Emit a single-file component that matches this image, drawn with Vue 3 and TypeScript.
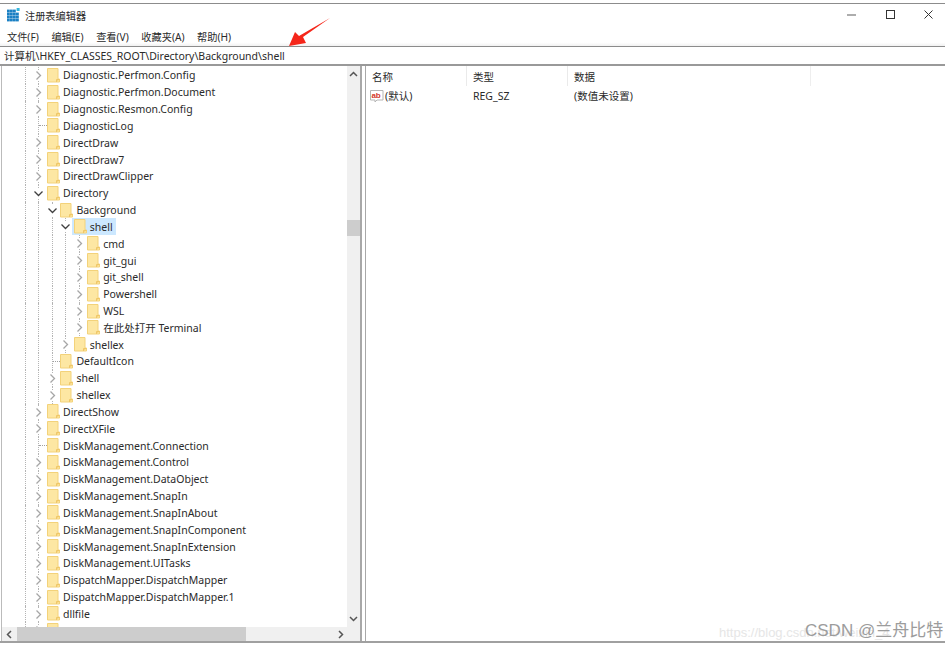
<script setup lang="ts">
interface Row { name: string; d: number; kind: 'closed' | 'open' | 'leaf'; sel?: boolean }
const r = (name: string, d = 0, kind: Row['kind'] = 'closed', sel = false): Row => ({ name, d, kind, sel })
const rows: Row[] = [
  r('Diagnostic.Perfmon.Config'), r('Diagnostic.Perfmon.Document'), r('Diagnostic.Resmon.Config'),
  r('DiagnosticLog', 0, 'leaf'), r('DirectDraw'), r('DirectDraw7'), r('DirectDrawClipper'),
  r('Directory', 0, 'open'), r('Background', 1, 'open'), r('shell', 2, 'open', true),
  r('cmd', 3), r('git_gui', 3), r('git_shell', 3), r('Powershell', 3), r('WSL', 3), r('在此处打开 Terminal', 3),
  r('shellex', 2), r('DefaultIcon', 1, 'leaf'), r('shell', 1), r('shellex', 1),
  r('DirectShow'), r('DirectXFile'), r('DiskManagement.Connection', 0, 'leaf'),
  r('DiskManagement.Control'), r('DiskManagement.DataObject'), r('DiskManagement.SnapIn'),
  r('DiskManagement.SnapInAbout'), r('DiskManagement.SnapInComponent'), r('DiskManagement.SnapInExtension'),
  r('DiskManagement.UITasks'), r('DispatchMapper.DispatchMapper'), r('DispatchMapper.DispatchMapper.1'),
  r('dllfile'), r(''),
]
const menus = ['文件(F)', '编辑(E)', '查看(V)', '收藏夹(A)', '帮助(H)']
const cols = ['名称', '类型', '数据']
const grid = [0, 1, 2, 3]
</script>

<template>
  <div class="win">
    <header class="title">
      <svg class="appicon" width="14" height="14" viewBox="0 0 14 14">
        <template v-for="y in grid" :key="y">
          <rect v-for="x in grid" :key="x" v-show="!(y === 0 && x === 3)" :x="x * 3" :y="y * 3 + 1.6" width="2.8" height="2.8" fill="#1a80c4" />
        </template>
        <rect x="9.6" y="0" width="3" height="3" fill="#35b6dc" />
      </svg>
      <span class="title-text">注册表编辑器</span>
      <div class="controls">
        <svg width="11" height="11" viewBox="0 0 11 11"><path d="M1 6h9" stroke="#777" stroke-width="1.2" /></svg>
        <svg width="11" height="11" viewBox="0 0 11 11"><rect x="1.5" y="1.5" width="8" height="8" fill="none" stroke="#333" /></svg>
        <svg width="11" height="11" viewBox="0 0 11 11"><path d="M1.5 1.5l8 8M9.5 1.5l-8 8" stroke="#333" /></svg>
      </div>
    </header>

    <nav class="menu"><span v-for="m in menus" :key="m">{{ m }}</span></nav>
    <div class="address">计算机\HKEY_CLASSES_ROOT\Directory\Background\shell</div>

    <main class="panes">
      <section class="left">
        <div class="upper">
          <div class="tree">
            <div v-for="(row, i) in rows" :key="i" class="row">
              <span v-for="g in row.d + 1" :key="g" class="guide"></span>
              <span class="stem">
                <span v-if="row.kind === 'leaf'" class="dash"></span>
                <svg v-else class="chev" width="11" height="11" viewBox="0 0 11 11">
                  <path v-if="row.kind === 'closed'" d="M3.500 1.500l4 4-4 4" fill="none" stroke="#a6a6a6" stroke-width="1.3" />
                  <path v-else d="M1.500 3.500l4 4 4-4" fill="none" stroke="#404040" stroke-width="1.3" />
                </svg>
              </span>
              <span class="item" :class="{ sel: row.sel }">
                <svg class="folder" width="13" height="15" viewBox="0 0 13 15">
                  <path d="M.5.5h10.500v10.500h1.500v3H.5z" fill="#fde7a3" stroke="#f3d27a" />
                  <path d="M9.500 14V11.500h3" fill="#f7d57f" stroke="#efc768" />
                </svg>
                <span class="label">{{ row.name }}</span>
              </span>
            </div>
          </div>
          <div class="vbar">
            <svg width="13" height="13" viewBox="0 0 13 13"><path d="M3 8l3.500-3.500L10 8" fill="none" stroke="#555" stroke-width="1.5" /></svg>
            <div class="vthumb"></div>
            <svg class="down" width="13" height="13" viewBox="0 0 13 13"><path d="M3 5l3.500 3.500L10 5" fill="none" stroke="#555" stroke-width="1.500" /></svg>
          </div>
        </div>
        <div class="hbar">
          <svg width="13" height="13" viewBox="0 0 13 13"><path d="M8 3L4.500 6.500 8 10" fill="none" stroke="#555" stroke-width="1.500" /></svg>
          <div class="hthumb"></div>
          <svg class="right-arrow" width="13" height="13" viewBox="0 0 13 13"><path d="M5 3l3.500 3.500L5 10" fill="none" stroke="#555" stroke-width="1.500" /></svg>
        </div>
      </section>

      <section class="right">
        <div class="thead">
          <span v-for="c in cols" :key="c" class="th">{{ c }}</span>
        </div>
        <div class="tr">
          <span class="td name">
            <svg width="14" height="14" viewBox="0 0 14 14">
              <path d="M.5 1.500h12.500v9.500H7l-2 2v-2H.5z" fill="#fff" stroke="#b5b5b5" />
              <text x="1.400" y="8.800" font-size="8" font-weight="700" fill="#d2382a" font-family="Liberation Sans, sans-serif">ab</text>
            </svg>
            (默认)
          </span>
          <span class="td">REG_SZ</span>
          <span class="td">(数值未设置)</span>
        </div>
      </section>
    </main>

    <svg class="arrow" width="50" height="36" viewBox="0 0 50 36">
      <polygon points="1,32 7,18 11,22 42,4 15,23 18,29" fill="#f5261a" />
    </svg>
    <div class="wm-url">https://blog.csdn.net/weixin_4</div>
    <div class="wm">CSDN @兰舟比特</div>
  </div>
</template>

<style>
body { margin: 0; background: #fff; }
</style>

<style scoped>
.win {
  position: relative;
  width: 945px;
  height: 645px;
  overflow: hidden;
  background: #fff;
  color: #2a2a2a;
  font-family: "Noto Sans", "Noto Sans CJK SC", sans-serif;
  font-size: 10.5px;
  display: flex;
  flex-direction: column;
  padding-top: 3px;
  box-sizing: border-box;
}
.title {
  height: 22px;
  padding-bottom: 2px;
  border-top: 1px solid #8c8c8c;
  display: flex;
  align-items: center;
  padding-left: 7px;
  flex: none;
}
.appicon { margin-right: 4px; }
.title-text { font-size: 10.2px; }
.controls {
  margin-left: auto;
  display: flex;
  align-items: center;
  gap: 27.500px;
  padding-right: 11px;
  margin-top: -1px;
}
.menu {
  height: 16px;
  padding-bottom: 2px;
  flex: none;
  display: flex;
  align-items: center;
  padding-left: 7px;
  gap: 12.600px;
  font-size: 10.2px;
  background: linear-gradient(#fff 80%, #f1f1f1);
}
.address {
  height: 17px;
  flex: none;
  border-top: 1px solid #8c8c8c;
  border-bottom: 2px solid #999;
  display: flex;
  align-items: center;
  padding-left: 4px;
  font-size: 10.5px;
}
.panes {
  flex: 1;
  min-height: 0;
  display: flex;
  border-bottom: 2px solid #a0a0a0;
  margin-bottom: 2px;
  padding-left: 2px;
}
.left {
  width: 358px;
  flex: none;
  display: flex;
  flex-direction: column;
  border-right: 2px solid #a8a8a8;
  border-left: 1px solid #bbb;
  margin-left: -1px;
}
.upper { flex: 1; min-height: 0; display: flex; }
.tree {
  width: 345px;
  flex: none;
  overflow: hidden;
  padding-left: 23px;
  padding-top: 1px;
  box-sizing: border-box;
}
.row {
  height: 16.84px;
  display: flex;
  align-items: stretch;
}
.guide {
  width: 13.400px;
  flex: none;
  box-sizing: border-box;
  border-left: 1px dotted #b4b4b4;
}
.stem {
  position: relative;
  width: 8.600px;
  flex: none;
  box-sizing: border-box;
  border-left: 1px dotted #b4b4b4;
}
.chev {
  position: absolute;
  left: -6px;
  top: 3px;
  background: #fff;
}
.dash {
  position: absolute;
  left: 0;
  right: 0;
  top: 8px;
  border-top: 1px dotted #a0a0a0;
}
.item {
  display: flex;
  align-items: center;
  padding-right: 3px;
  margin-left: -2px;
  padding-left: 2px;
  white-space: nowrap;
}
.item.sel { background: #cce8ff; }
.folder { flex: none; }
.label {
  margin-left: 3px;
  font-size: 10.5px;
  color: #2a2a2a;
}
.vbar {
  width: 13px;
  flex: none;
  background: #f0f0f0;
  display: flex;
  flex-direction: column;
  padding-top: 2px;
}
.vthumb {
  height: 16px;
  background: #cdcdcd;
  margin-top: 139px;
}
.down { margin-top: auto; margin-bottom: 2px; }
.hbar {
  height: 14px;
  flex: none;
  background: #f0f0f0;
  display: flex;
  align-items: center;
  padding-left: 1px;
}
.hthumb {
  width: 229px;
  height: 14px;
  margin-left: 1px;
  background: #cdcdcd;
}
.right-arrow { margin-left: auto; margin-right: 13px; }
.right {
  flex: 1;
  min-width: 0;
  margin-left: 3px;
  border-left: 1px solid #a8a8a8;
}
.thead {
  height: 20px;
  display: flex;
  align-items: center;
  width: 445px;
  box-sizing: border-box;
  border-right: 1px solid #eee;
}
.th {
  width: 101px;
  flex: none;
  box-sizing: border-box;
  padding-left: 6px;
  height: 100%;
  display: flex;
  align-items: center;
  border-right: 1px solid #eaeaea;
}
.th:last-child { border-right: 0; flex: 1; }
.tr {
  display: flex;
  align-items: center;
  height: 19px;
}
.td {
  width: 101px;
  flex: none;
  box-sizing: border-box;
  padding-left: 6px;
}
.td.name {
  display: flex;
  align-items: center;
  gap: 1px;
  padding-left: 4px;
}
.arrow { position: absolute; left: 288px; top: 14px; }
.wm {
  position: absolute;
  left: 805px;
  top: 616px;
  font-size: 17px;
  color: #9c9c9c;
  white-space: nowrap;
  font-family: "Liberation Sans", "Noto Sans CJK SC", sans-serif;
}
.wm-url {
  position: absolute;
  left: 719px;
  top: 625px;
  font-size: 13px;
  color: #e6e6e6;
  white-space: nowrap;
  font-family: "Liberation Sans", sans-serif;
}
</style>
